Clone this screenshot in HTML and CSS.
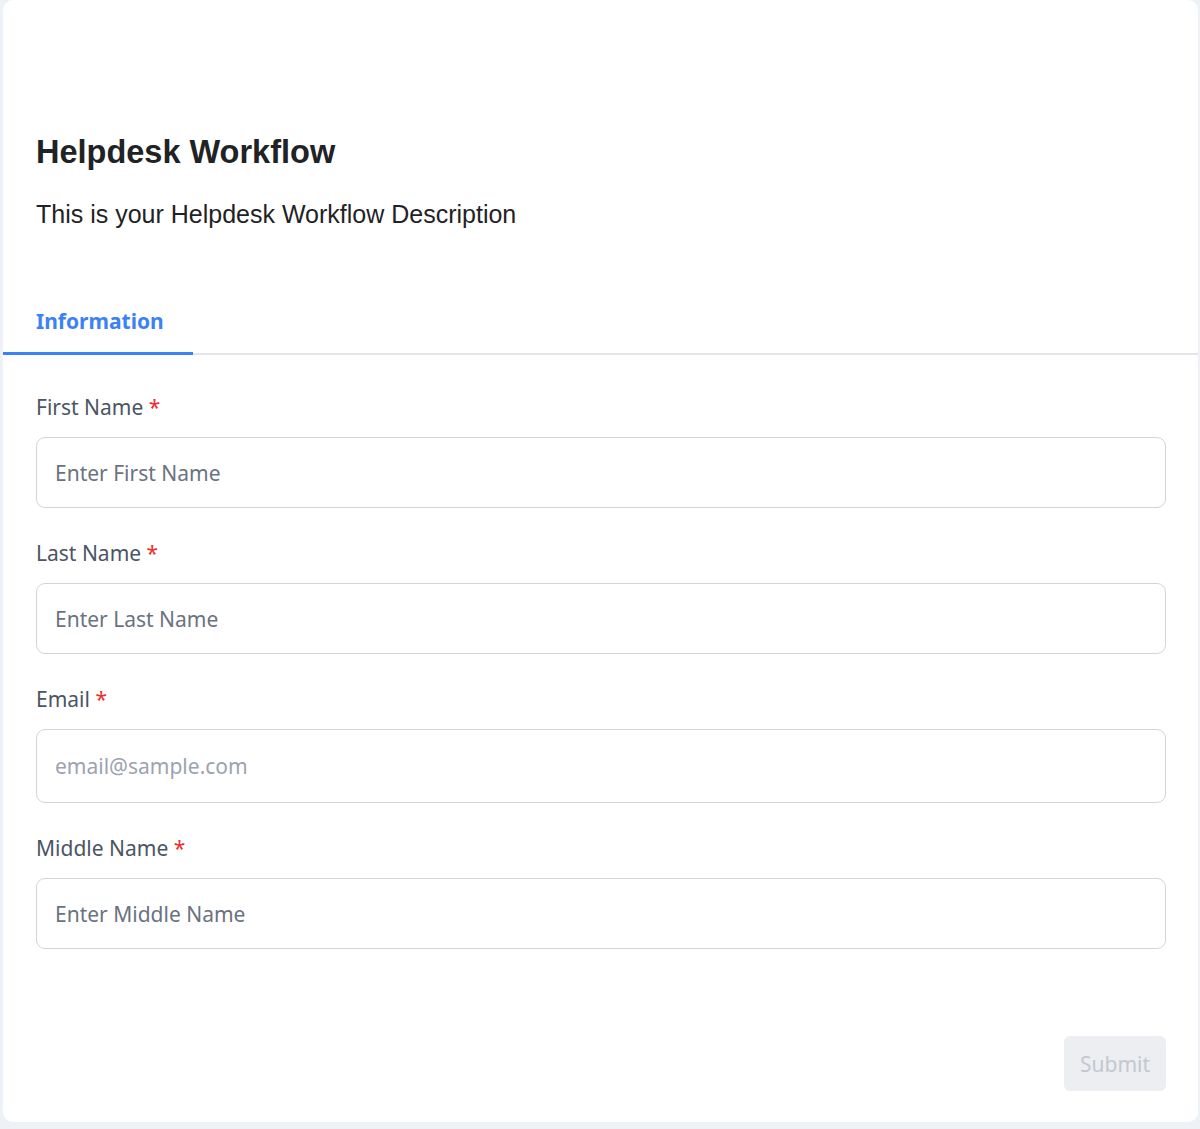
FILE: index.html
```html
<!DOCTYPE html>
<html lang="en">
<head>
    <meta charset="UTF-8">
    <meta name="viewport" content="width=device-width, initial-scale=1.0">
    <title>Helpdesk Workflow</title>
    <link rel="stylesheet" href="styles.css">
</head>
<body>
    <div class="card">
        <div class="header">
            <h1>Helpdesk Workflow</h1>
            <p class="description">This is your Helpdesk Workflow Description</p>
        </div>

        <div class="tabs">
            <div class="tab active">Information</div>
        </div>

        <form class="form" id="workflowForm">
            <div class="field">
                <label for="firstName">First Name <span class="req">*</span></label>
                <input type="text" id="firstName" placeholder="Enter First Name">
            </div>
            <div class="field">
                <label for="lastName">Last Name <span class="req">*</span></label>
                <input type="text" id="lastName" placeholder="Enter Last Name">
            </div>
            <div class="field">
                <label for="email">Email <span class="req">*</span></label>
                <input type="email" id="email" class="email" placeholder="email@sample.com">
            </div>
            <div class="field">
                <label for="middleName">Middle Name <span class="req">*</span></label>
                <input type="text" id="middleName" placeholder="Enter Middle Name">
            </div>

            <div class="actions">
                <button type="submit" disabled>Submit</button>
            </div>
        </form>
    </div>
</body>
</html>
```

FILE: styles.css
```css
body {
    margin: 0;
    padding: 0 2px 7px 3px;
    background-color: #eef1f6;
    font-family: "Segoe UI", "Noto Sans", sans-serif;
}

.card {
    background-color: #fff;
    border-radius: 10px;
    height: 1122px;
    box-sizing: border-box;
    display: flex;
    flex-direction: column;
}

.header {
    padding: 133px 33px 0;
}

h1 {
    margin: 0;
    font-family: "Liberation Sans", Arial, sans-serif;
    font-size: 32.5px;
    line-height: 38px;
    font-weight: bold;
    color: #1f2326;
}

.description {
    margin: 27px 0 0;
    font-family: "Liberation Sans", Arial, sans-serif;
    font-size: 25px;
    line-height: 32px;
    color: #1f2326;
}

.tabs {
    margin-top: 77px;
    display: flex;
    border-bottom: 2px solid #e3e5e9;
}

.tab {
    padding: 0 29px 17px 33px;
    font-size: 21px;
    line-height: 28px;
    font-weight: bold;
    color: #3b82f6;
    margin-bottom: -2px;
}

.tab.active {
    border-bottom: 3px solid #3b82f6;
}

.form {
    flex: 1;
    padding: 38px 32px 31px 33px;
    display: flex;
    flex-direction: column;
}

.field {
    display: flex;
    flex-direction: column;
    margin-bottom: 31px;
}

label {
    font-size: 21px;
    line-height: 28px;
    color: #4b5563;
    margin-bottom: 16px;
}

.req {
    color: #ef2b2b;
}

input {
    height: 71px;
    box-sizing: border-box;
    border: 1px solid #d1d5db;
    border-radius: 9px;
    padding: 0 18px;
    font-family: inherit;
    font-size: 21px;
    color: #374151;
    outline: none;
}

input.email {
    height: 74px;
}

input::placeholder {
    color: #6b7280;
}

input.email::placeholder {
    color: #9ca3af;
}

.actions {
    margin-top: auto;
    display: flex;
    justify-content: flex-end;
}

button {
    width: 102px;
    height: 55px;
    border: none;
    border-radius: 6px;
    background-color: #eceef2;
    color: #c3c8d0;
    font-family: inherit;
    font-size: 21px;
}
```
